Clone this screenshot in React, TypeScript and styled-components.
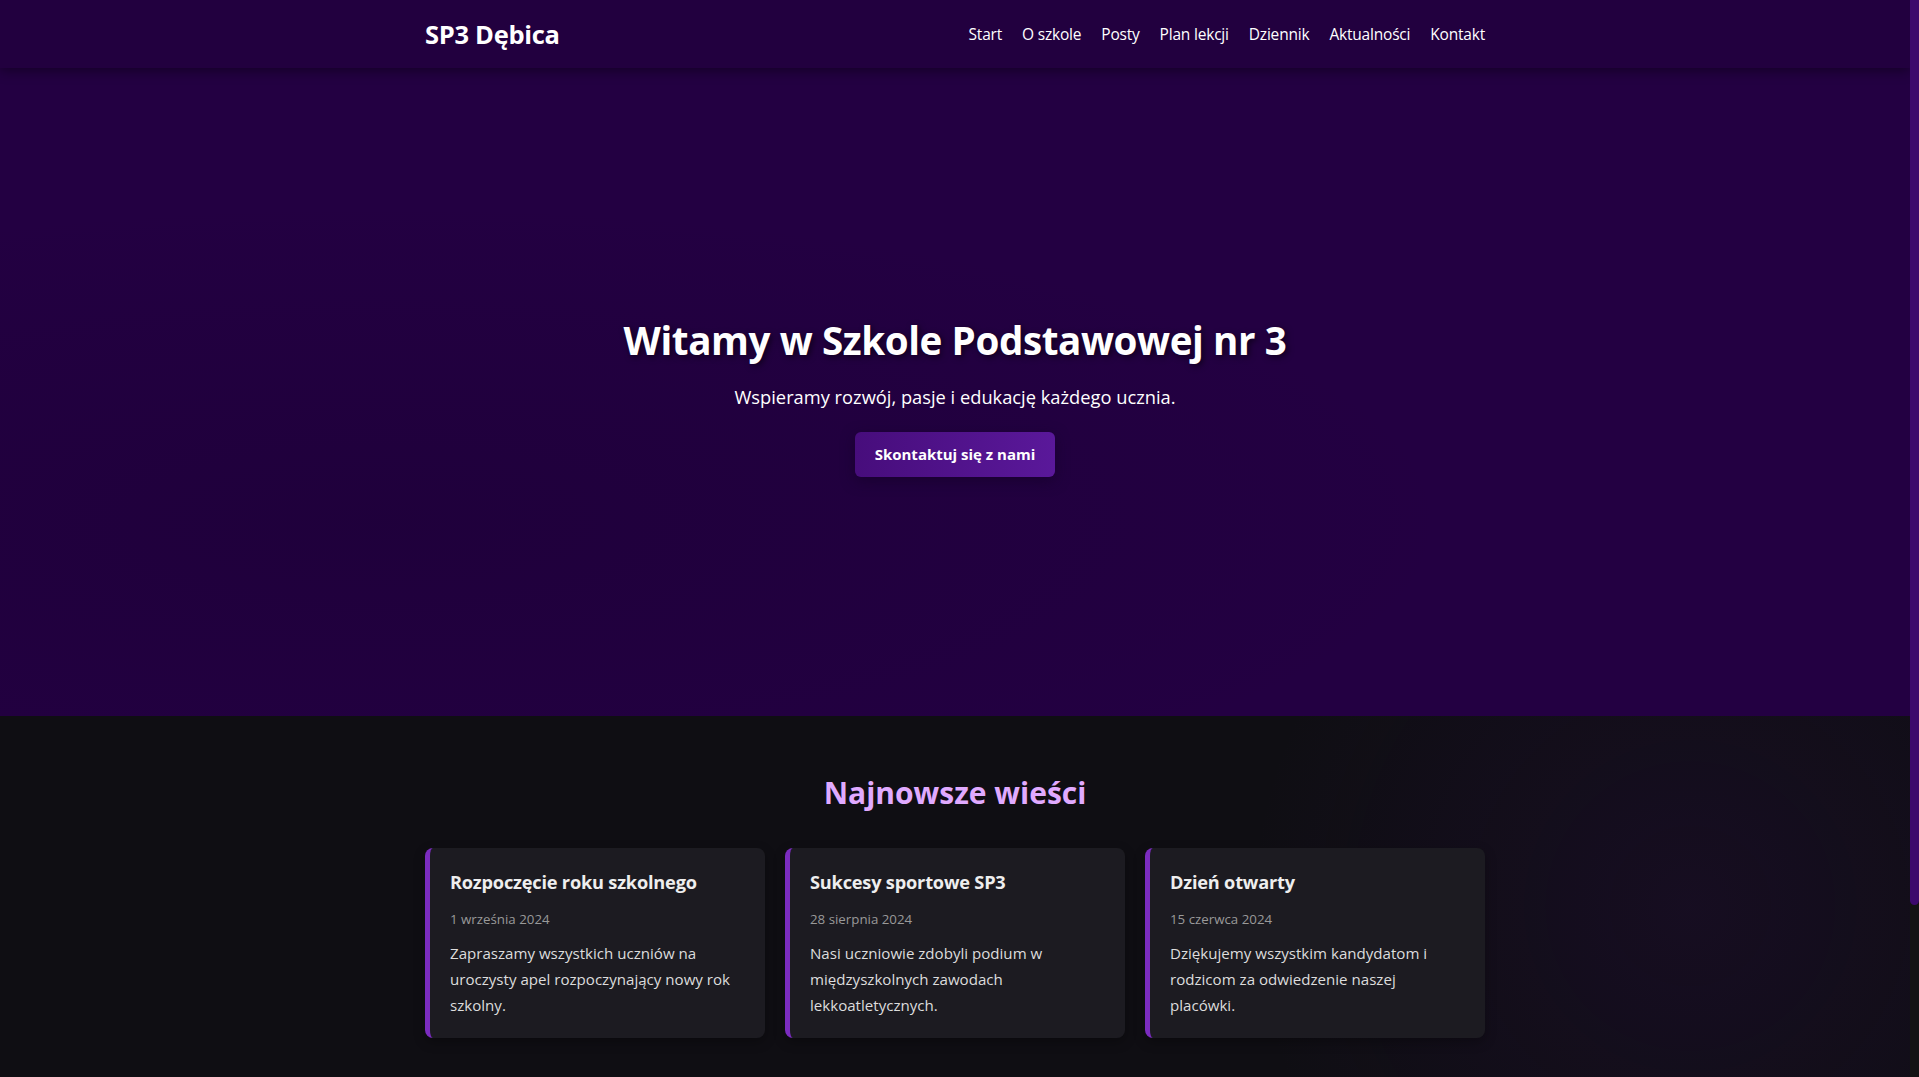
import React from "react";
import styled, { createGlobalStyle } from "styled-components";

const GlobalStyle = createGlobalStyle`
  html, body {
    margin: 0;
    padding: 0;
    background: #0f0e13;
    color: #eee;
    font-family: "Open Sans", "Noto Sans", Arial, sans-serif;
  }
  body { margin-right: 9px; }
  * { box-sizing: border-box; }
`;

const Container = styled.div`
  max-width: 1060px;
  margin: 0 auto;
`;

// page scrollbar, drawn since the headless browser hides the native one
const ScrollRail = styled.div`
  position: fixed;
  top: 0;
  right: 0;
  bottom: 0;
  width: 9px;
  background: #131313;
  z-index: 10;
`;

const ScrollThumb = styled.div`
  height: 84%;
  background: #3c096c;
  border-radius: 0 0 5px 5px;
`;

const Header = styled.header`
  background: #22003f;
  height: 68px;
  box-shadow: 0 2px 12px rgba(0, 0, 0, 0.45);
  position: relative;
  z-index: 2;
`;

const HeaderInner = styled(Container)`
  height: 100%;
  display: flex;
  align-items: center;
  justify-content: space-between;
`;

const Logo = styled.div`
  font-size: 25.5px;
  font-weight: 700;
  color: #fff;
  letter-spacing: -0.3px;
`;

const Nav = styled.nav`
  display: flex;
  gap: 20px;
`;

const NavLink = styled.a`
  color: #fff;
  text-decoration: none;
  font-size: 15.5px;
  letter-spacing: -0.2px;
`;

const Hero = styled.section`
  height: 648px;
  background:
    radial-gradient(ellipse at 20% 70%, rgba(20, 0, 40, 0.25), transparent 50%),
    #230042;
  display: flex;
  flex-direction: column;
  align-items: center;
  justify-content: center;
  text-align: center;
  padding-top: 9px;
`;

const HeroTitle = styled.h1`
  margin: 0 0 20px;
  font-size: 38.6px;
  font-weight: 700;
  color: #fff;
  line-height: 1.25;
  letter-spacing: -0.4px;
  text-shadow: 2px 2px 6px rgba(0, 0, 0, 0.6);
`;

const HeroText = styled.p`
  margin: 0 0 22px;
  font-size: 18.3px;
  color: #fff;
  line-height: 1.4;
`;

const CtaButton = styled.a`
  display: inline-block;
  padding: 12px 20px;
  border-radius: 6px;
  background: linear-gradient(90deg, #470d7c, #5a189a);
  color: #fff;
  font-weight: 700;
  font-size: 15px;
  line-height: 21px;
  text-decoration: none;
  box-shadow: 0 4px 14px rgba(20, 0, 40, 0.6);
`;

const News = styled.section`
  background:
    radial-gradient(circle 440px at 88.5% 190px, rgba(60, 9, 108, 0.16), transparent),
    #0f0e13;
  padding: 57px 0 244px;
`;

const SectionTitle = styled.h2`
  margin: 0 0 36px;
  text-align: center;
  font-size: 30px;
  font-weight: 700;
  color: #e0aaff;
  line-height: 1.3;
`;

const CardGrid = styled(Container)`
  display: grid;
  grid-template-columns: repeat(3, 1fr);
  gap: 20px;
`;

const Card = styled.article`
  background: #1c1b21;
  border-left: 5px solid #7b2cbf;
  border-radius: 8px;
  padding: 22px 26px 20px 20px;
  box-shadow: 0 4px 12px rgba(0, 0, 0, 0.3);
`;

const CardTitle = styled.h3`
  margin: 0 0 15px;
  font-size: 18.2px;
  font-weight: 700;
  color: #eee;
  line-height: 1.35;
  letter-spacing: -0.2px;
`;

const CardDate = styled.div`
  font-size: 13.3px;
  color: #999;
  margin-bottom: 12px;
  line-height: 1.4;
`;

const CardText = styled.p`
  margin: 0;
  font-size: 15.1px;
  color: #ddd;
  line-height: 26px;
`;

const links = ["Start", "O szkole", "Posty", "Plan lekcji", "Dziennik", "Aktualności", "Kontakt"];

const news = [
  {
    title: "Rozpoczęcie roku szkolnego",
    date: "1 września 2024",
    text: "Zapraszamy wszystkich uczniów na uroczysty apel rozpoczynający nowy rok szkolny.",
  },
  {
    title: "Sukcesy sportowe SP3",
    date: "28 sierpnia 2024",
    text: "Nasi uczniowie zdobyli podium w międzyszkolnych zawodach lekkoatletycznych.",
  },
  {
    title: "Dzień otwarty",
    date: "15 czerwca 2024",
    text: "Dziękujemy wszystkim kandydatom i rodzicom za odwiedzenie naszej placówki.",
  },
];

const App: React.FC = () => {
  return (
    <>
      <GlobalStyle />
      <ScrollRail>
        <ScrollThumb />
      </ScrollRail>

      <Header>
        <HeaderInner>
          <Logo>SP3 Dębica</Logo>
          <Nav>
            {links.map((l) => (
              <NavLink key={l} href="#">
                {l}
              </NavLink>
            ))}
          </Nav>
        </HeaderInner>
      </Header>

      <Hero>
        <HeroTitle>Witamy w Szkole Podstawowej nr 3</HeroTitle>
        <HeroText>Wspieramy rozwój, pasje i edukację każdego ucznia.</HeroText>
        <CtaButton href="#">Skontaktuj się z nami</CtaButton>
      </Hero>

      <News>
        <SectionTitle>Najnowsze wieści</SectionTitle>
        <CardGrid>
          {news.map((n) => (
            <Card key={n.title}>
              <CardTitle>{n.title}</CardTitle>
              <CardDate>{n.date}</CardDate>
              <CardText>{n.text}</CardText>
            </Card>
          ))}
        </CardGrid>
      </News>
    </>
  );
};

export default App;
